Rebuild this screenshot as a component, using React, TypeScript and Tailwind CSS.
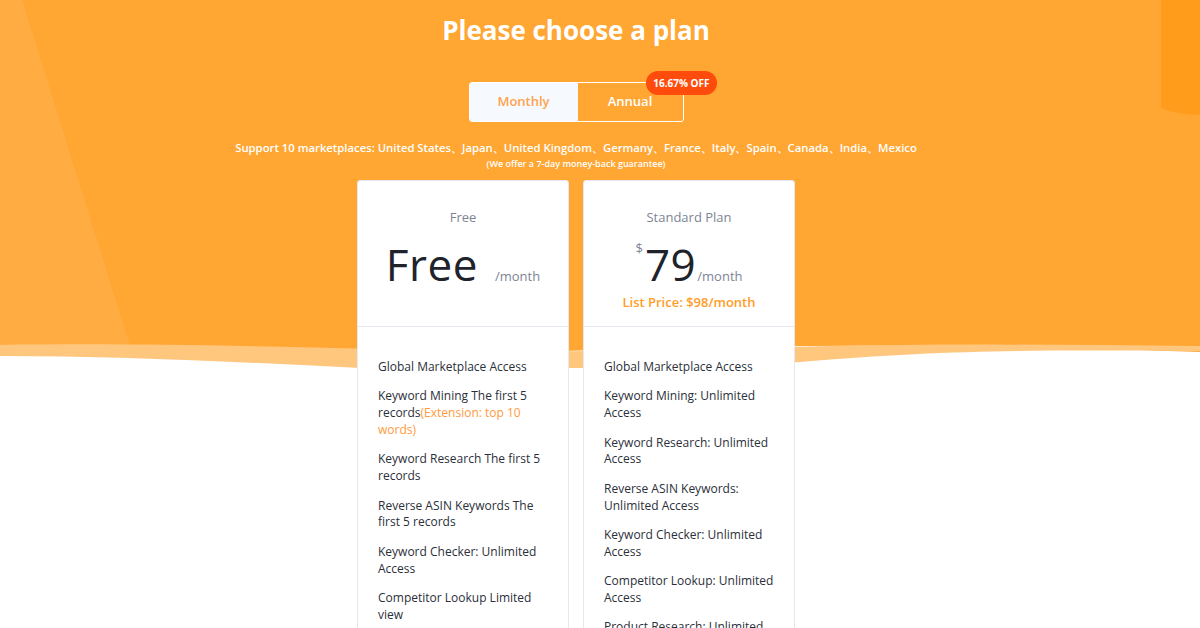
import React from 'react';

type Feature = { text: string; extra?: string };

interface Plan {
  name: string;
  price: string;
  currency?: boolean;
  listPrice?: string;
  features: Feature[];
}

const plans: Plan[] = [
  {
    name: 'Free',
    price: 'Free',
    features: [
      { text: 'Global Marketplace Access' },
      { text: 'Keyword Mining The first 5 records', extra: '(Extension: top 10 words)' },
      { text: 'Keyword Research The first 5 records' },
      { text: 'Reverse ASIN Keywords The first 5 records' },
      { text: 'Keyword Checker: Unlimited Access' },
      { text: 'Competitor Lookup Limited view' },
      { text: 'Product Research The first 5 records' },
    ],
  },
  {
    name: 'Standard Plan',
    price: '79',
    currency: true,
    listPrice: 'List Price: $98/month',
    features: [
      { text: 'Global Marketplace Access' },
      { text: 'Keyword Mining: Unlimited Access' },
      { text: 'Keyword Research: Unlimited Access' },
      { text: 'Reverse ASIN Keywords: Unlimited Access' },
      { text: 'Keyword Checker: Unlimited Access' },
      { text: 'Competitor Lookup: Unlimited Access' },
      { text: 'Product Research: Unlimited Access' },
    ],
  },
];

// background shapes of the orange header, wave at the bottom
const HeaderBackground = () => (
  <svg
    className="absolute left-0 top-0"
    width="1200"
    height="380"
    viewBox="0 0 1200 380"
    preserveAspectRatio="none"
  >
    <path d="M0 0 H1200 V352 C1000 345 800 343 600 350 C400 357 200 345 0 345 Z" fill="#ffa633" />
    <path d="M0 0 H22 L130 346 C80 345 40 345 0 345 Z" fill="#ffad42" />
    <path d="M1161 0 H1200 V115 C1185 115 1172 112 1161 108 Z" fill="#ff9c1c" />
    <path
      d="M0 345 C120 343 260 346 420 350 C600 355 760 346 900 345 C1000 344 1100 345 1200 346 L1200 351 C1050 350 950 349 800 362 C650 372 450 366 360 368 C240 362 120 356 0 356 Z"
      fill="#ffc77e"
    />
  </svg>
);

const PlanCard = ({ plan }: { plan: Plan }) => (
  <div className="w-[212px] bg-white border border-[#e6e8f1] rounded-[3px]">
    <div className="h-[146px] border-b border-[#e6e8f1] flex flex-col items-center">
      <div className="mt-[27px] text-[13px] leading-[18px] text-[#7d8594]">{plan.name}</div>
      <div className="mt-[13px] flex items-end">
        {plan.currency && (
          <span className="self-start mt-[2px] mr-[2px] text-[13px] leading-[14px] text-[#7d8594]">$</span>
        )}
        <span className="text-[44px] leading-[50px] text-[#20232b] tracking-[0.5px]">{plan.price}</span>
        <span
          className={
            plan.currency
              ? 'ml-[1px] mb-[5px] text-[13px] leading-[16px] text-[#7d8594]'
              : 'ml-[17px] mb-[5px] text-[13px] leading-[16px] text-[#7d8594]'
          }
        >
          /month
        </span>
      </div>
      {plan.listPrice && (
        <div className="mt-[4px] text-[13px] leading-[18px] font-semibold text-[#ff9d27]">{plan.listPrice}</div>
      )}
    </div>
    <ul className="px-[20px] pt-[32px] flex flex-col gap-[12.6px]">
      {plan.features.map((f, i) => (
        <li key={i} className="text-[12px] leading-[16.8px] text-[#2b2f3a]">
          {f.text}
          {f.extra && <span className="text-[#ff9a3c]">{f.extra}</span>}
        </li>
      ))}
    </ul>
  </div>
);

export default function App() {
  return (
    <div
      className="relative w-[1200px] h-[628px] overflow-hidden bg-white"
      style={{ fontFamily: '"Open Sans", "Noto Sans", Arial, sans-serif' }}
    >
      <HeaderBackground />
      <div className="relative w-[1152px] flex flex-col items-center">
        <h1 className="mt-[14px] text-[26px] leading-[32px] font-bold text-white">
          Please choose a plan
        </h1>

        <div className="relative mt-[36px] flex h-[40px] w-[215px] rounded-[3px] border border-white">
          <button className="w-[108px] h-full bg-[#f6f9fd] rounded-l-[2px] text-[13px] font-semibold text-[#ffa24d]">
            Monthly
          </button>
          <button className="flex-1 h-full text-[13px] font-semibold text-white">Annual</button>
          <span className="absolute -top-[12px] -right-[34px] h-[24px] px-[7px] rounded-full bg-[#ff4b0c] text-white text-[10px] font-bold leading-[24px] whitespace-nowrap">
            16.67% OFF
          </span>
        </div>

        <div className="mt-[17px] text-[11.3px] leading-[17px] font-semibold text-white whitespace-nowrap">
          Support 10 marketplaces: United States、Japan、United Kingdom、Germany、France、Italy、Spain、Canada、India、Mexico
        </div>
        <div className="mt-[1px] text-[9px] leading-[14px] font-semibold text-white">
          (We offer a 7-day money-back guarantee)
        </div>

        <div className="mt-[9px] flex gap-[14px]">
          {plans.map((p) => (
            <PlanCard key={p.name} plan={p} />
          ))}
        </div>
      </div>
    </div>
  );
}
